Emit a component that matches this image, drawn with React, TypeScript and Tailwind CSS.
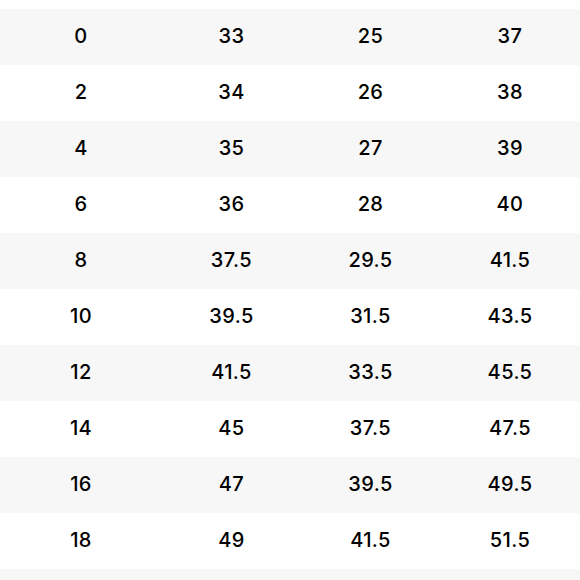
const rows = [
    ["0", "33", "25", "37"],
    ["2", "34", "26", "38"],
    ["4", "35", "27", "39"],
    ["6", "36", "28", "40"],
    ["8", "37.5", "29.5", "41.5"],
    ["10", "39.5", "31.5", "43.5"],
    ["12", "41.5", "33.5", "45.5"],
    ["14", "45", "37.5", "47.5"],
    ["16", "47", "39.5", "49.5"],
    ["18", "49", "41.5", "51.5"],
    ["", "", "", ""],
]

const App = () => {
    return (
        <div className="w-[580px] h-[580px] overflow-hidden bg-white pt-[9px] font-['Inter',sans-serif] text-[20px] font-medium tracking-[0.4px] text-black">
            {rows.map((row, i) => (
                <div
                    key={i}
                    className={`grid grid-cols-[162px_139px_139px_140px] h-[56px] items-center pb-[3px] ${i % 2 === 0 ? 'bg-[#f7f7f7]' : 'bg-white'}`}
                >
                    {row.map((cell, j) => (
                        <div key={j} className="text-center">{cell}</div>
                    ))}
                </div>
            ))}
        </div>
    )
}

export default App
